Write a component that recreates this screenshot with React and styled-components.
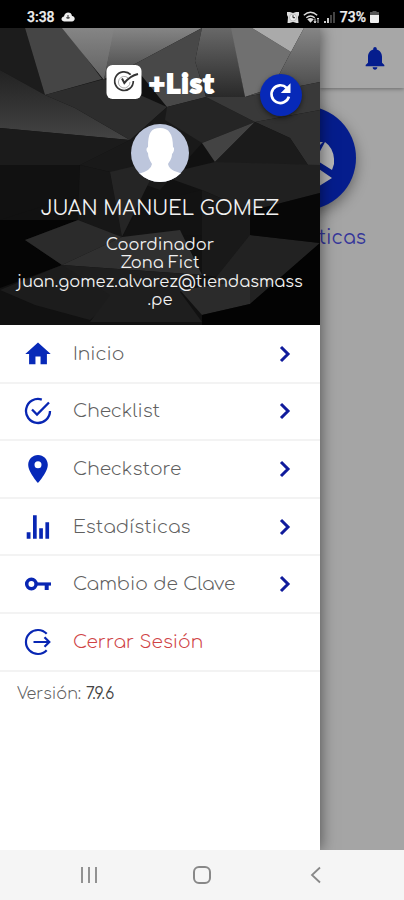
import React from "react";
import styled, { createGlobalStyle } from "styled-components";

const Global = createGlobalStyle`
  * { box-sizing: border-box; }
  body { margin: 0; background: #000; font-family: Comfortaa, Quicksand, Lato, sans-serif; }
  svg { display: block; flex: none; }
`;
const Phone = styled.div`
  width: 404px; height: 900px; overflow: hidden;
  display: grid; grid-template-rows: 28px 822px 50px;
`;
const StatusBar = styled.header`
  background: #000; color: #eee; display: flex; align-items: center;
  padding: 6px 25px 0 27px; font: 500 14px Roboto, sans-serif;
`;
const Clock = styled.span`letter-spacing: ${p => p.$track || 0}px; -webkit-text-stroke: .25px #eee;`;
const CloudIcon = styled.svg`margin-left: 6px;`;
const StatusIcons = styled.div`margin-left: auto; display: flex; align-items: center; gap: 4px;`;
const Body = styled.div`display: grid; grid-template-columns: 320px 84px; min-height: 0; overflow: hidden;`;
const Drawer = styled.aside`
  background: #fff; box-shadow: 1px 0 14px rgba(0,0,0,.5); z-index: 1;
  display: flex; flex-direction: column; min-width: 0;
`;
const Profile = styled.section`
  height: 297px; flex: none; position: relative; overflow: hidden; color: #f2f2f2; background: #111;
  display: flex; flex-direction: column; align-items: center;
`;
const Backdrop = styled.svg`position: absolute; inset: 0;`;
const Brand = styled.div`
  position: relative; display: flex; align-items: center; gap: 7px; margin: 37px 0 0 1px; height: 34px;
`;
const BrandName = styled.span`
  font: 900 27px/34px Lato, sans-serif; letter-spacing: ${p => p.$track}px; color: #fff;
  -webkit-text-stroke: 2px #fff; padding-top: 2px;
`;
const Refresh = styled.button`
  position: absolute; left: 260px; top: 46px; width: 42px; height: 42px; border: 0; padding: 0 2px 2px 0;
  border-radius: 50%; background: #0729b8; display: grid; place-items: center;
  box-shadow: 0 2px 5px rgba(0,0,0,.5);
`;
const Avatar = styled.div`
  position: relative; width: 58px; height: 58px; border-radius: 50%; overflow: hidden;
  margin-top: 24.5px; background: #bdc6dc;
`;
const Name = styled.h1`
  position: relative; margin: 14px 0 0; font-weight: 400; font-size: 19.5px; line-height: 26px;
  white-space: nowrap;
`;
const Details = styled.div`
  position: relative; margin-top: 14.5px; display: flex; flex-direction: column; align-items: center;
`;
const Detail = styled.span`
  font-size: 16.2px; line-height: 18.3px; white-space: nowrap;
`;
const Menu = styled.nav`display: flex; flex-direction: column; padding-top: 1px;`;
const MenuItem = styled.a`
  height: 57.6px; border-bottom: 2px solid #f3f3f3; display: grid; align-items: center;
  grid-template-columns: 28px 1fr 24px; column-gap: 21px; padding: 0 24px;
  color: ${p => (p.$danger ? "#cf4345" : "#606060")};
`;
const Label = styled.span`
  font-size: 18.6px; line-height: 24px; font-weight: 300; white-space: nowrap;
`;
const Version = styled.p`
  margin: 12px 0 0 17px; font-size: 16px; line-height: 20px; color: #606060; font-weight: 300;
`;
const Number = styled.span`color: #444; font-weight: 400;`;
const Page = styled.main`background: #a5a5a5; display: flex; flex-direction: column; overflow: hidden;`;
const TopBar = styled.div`
  height: 60px; flex: none; background: #a7a7a7; box-shadow: 0 1px 4px rgba(0,0,0,.35);
  display: flex; justify-content: center; align-items: center; padding-left: 26px;
`;
const Tile = styled.div`display: flex; flex-direction: column; width: 84px;`;
const Disc = styled.div`
  margin: 18px 0 0 -68px; width: 104px; height: 104px; border-radius: 50%; background: #051d8d;
  box-shadow: 0 5px 14px rgba(0,0,0,.4); display: flex; align-items: center; justify-content: center;
`;
const TileName = styled.span`
  align-self: flex-end; margin: 15px 38px 0 0; color: #35369a; font-size: 19px; line-height: 26px;
  white-space: nowrap;
`;
const NavBar = styled.footer`
  background: #f5f5f5; display: grid; grid-template-columns: repeat(3, 113.5px); padding-left: 32px;
  justify-items: center; align-items: center;
`;

const facets = [
  ["0,28 25,28 45,95 0,70", "#1c1c1c"],
  ["25,28 64,28 102,79 45,95", "#454545"],
  ["62,28 115,28 104,80", "url(#silver)"],
  ["114,28 202,28 133,65 104,79", "url(#steel)"],
  ["202,28 133,65 167,107 206,97 195,61", "#484848"],
  ["202,28 232,28 245,97 206,97 195,61", "url(#fall)"],
  ["231,28 252,28 291,52 272,88 245,97", "#707070"],
  ["252,28 304,28 291,52", "#aaaaaa"],
  ["304,28 320,28 320,82 245,97 272,88 291,52", "url(#steel)"],
  ["0,70 45,95 75,108 130,140 0,128", "url(#fold)"],
  ["45,95 104,79 167,107 130,140 75,108", "#2d2d2d"],
  ["0,128 130,140 80,165 0,165", "#1b1b1b"],
  ["80,165 130,140 167,107 202,143 160,190 110,172", "#191919"],
  ["167,107 206,97 255,122 202,143 165,120", "#252525"],
  ["206,97 245,97 320,82 320,110 255,122", "#393939"],
  ["255,122 320,110 320,185 308,165 290,138", "#303030"],
  ["202,143 255,122 215,162", "#434343"],
  ["255,122 290,138 308,165 270,190 215,162", "#1b1b1b"],
  ["0,165 80,165 78,195 0,220", "#111111"],
  ["80,165 110,172 122,237 78,220", "#171717"],
  ["110,172 160,160 122,237", "#252525"],
  ["160,175 215,162 320,165 320,193 250,211 202,190", "#202020"],
  ["122,237 140,205 202,190 215,235", "#121212"],
  ["0,220 78,220 25,240 62,265 0,288", "#050505"],
  ["25,240 78,220 122,237 62,265", "#2b2b2b"],
  ["62,265 122,237 180,230 202,275", "#303030"],
  ["202,190 250,211 250,280 202,275", "#191919"],
  ["0,290 62,265 130,285 90,320 35,305", "#1c1c1c"],
  ["62,265 202,275 180,292 202,322 90,322 110,295", "#1e1e1e"],
  ["250,235 320,243 250,304 202,295", "#222222"],
  ["180,290 250,280 250,304 202,315", "#2b2b2b"],
  ["320,243 320,325 202,325 202,315 250,304", "#030303"],
  ["250,235 250,211 320,193 320,243", "#070707"],
];

const Polygons = () => (
  <Backdrop width="320" height="297" viewBox="0 28 320 297">
    <defs>
      <linearGradient id="silver" x2="0" y2="1"><stop stopColor="#858585" /><stop offset="1" stopColor="#626262" /></linearGradient>
      <linearGradient id="steel" x2="0" y2="1"><stop stopColor="#858585" /><stop offset="1" stopColor="#454545" /></linearGradient>
      <linearGradient id="fall" x2="0" y2="1"><stop stopColor="#686868" /><stop offset="1" stopColor="#292929" /></linearGradient>
      <linearGradient id="fold" x2="0" y2="1"><stop stopColor="#222" /><stop offset="1" stopColor="#444" /></linearGradient>
    </defs>
    {facets.map(([points, fill]) => <polygon key={points} points={points} fill={fill} />)}
  </Backdrop>
);

const paths = {
  home: "M10 20v-6h4v6h5v-8h3L12 3 2 12h3v8z",
  pin: "M12 2C8.13 2 5 5.13 5 9c0 5.25 7 13 7 13s7-7.75 7-13c0-3.87-3.13-7-7-7zm0 9.5a2.5 2.5 0 0 1 0-5 2.5 2.5 0 0 1 0 5z",
  bell: "M12 22c1.1 0 2-.9 2-2h-4c0 1.1.89 2 2 2zm6-6v-5c0-3.07-1.64-5.64-4.5-6.32V4c0-.83-.67-1.5-1.5-1.5s-1.5.67-1.5 1.5v.68C7.63 5.36 6 7.92 6 11v5l-2 2v1h16v-1l-2-2z",
};
const Icon = ({ name }) => {
  if (name === "check") return (
    <svg width="28" height="28" viewBox="0 0 28 28" fill="none" stroke="#0826b3" strokeWidth="2.3">
      <path d="M17.8 2.6A12 12 0 1 0 26 14" /><path d="m8 12.5 5 5L25 5.5" />
    </svg>
  );
  if (name === "exit") return (
    <svg width="28" height="28" viewBox="0 0 28 28" fill="none" stroke="#0826b3" strokeWidth="2.2">
      <path d="M22.7 5.8a12 12 0 1 0 0 16.4M9.5 14H25M20.5 9.2l4.8 4.8-4.8 4.8" />
    </svg>
  );
  if (name === "bars") return (
    <svg width="28" height="28" viewBox="0 0 28 28" fill="#0826b3">
      <path d="M2.7 19.3h3.8v6.5H2.7zM9 2.2h3.7v23.6H9zM15.2 15.3h3.7v10.5h-3.7zM21.4 9.3h3.7v16.5h-3.7z" />
    </svg>
  );
  if (name === "key") return (
    <svg width="28" height="28" viewBox="0 0 28 28" fill="none" stroke="#0826b3">
      <circle cx="7.4" cy="14" r="4.7" strokeWidth="3.5" /><path d="M12 14h15" strokeWidth="3.2" /><path d="M22.7 14v6" strokeWidth="4" />
    </svg>
  );
  return <svg width="28" height="28" viewBox={name === "home" ? "1 1 22 22" : "2 2 20 20"} fill="#0729b8"><path d={paths[name]} /></svg>;
};
const Chevron = () => (
  <svg width="24" height="24" viewBox="0 0 24 24" fill="none" stroke="#101b9c" strokeWidth="3">
    <path d="m9 5 7 7-7 7" />
  </svg>
);
const items = [
  ["Inicio", "home"], ["Checklist", "check"], ["Checkstore", "pin"],
  ["Estadísticas", "bars"], ["Cambio de Clave", "key"], ["Cerrar Sesión", "exit"],
];

export default function App() {
  return (
    <Phone>
      <Global />
      <StatusBar>
        <Clock>3:38</Clock>
        <CloudIcon width="14" height="10" viewBox="0 0 14 10"><path d="M3 9.5C-.5 9-.2 5 3 4.6 3.5-.5 10.5-.7 11 4c3.7.4 3.5 5 0 5.5z" fill="#eee" /><path d="M7 3v4M5.2 5.8h3.6" stroke="#333" /></CloudIcon>
        <StatusIcons>
          <svg width="12" height="12" viewBox="0 0 12 12"><path d="M0 1h3l3 1 3-1h3v3l-1 2 .5 6H9.500L6 11l-3.500 1H.5L1 6 0 4z" fill="#ddd" /><circle cx="6" cy="6.500" r="3.500" fill="#eee" stroke="#999" strokeWidth=".5" /><path d="M6 4.300v2.400h2" fill="none" stroke="#222" /></svg>
          <svg width="17" height="13" viewBox="0 0 17 13" fill="none" stroke="#ddd" strokeWidth="1.4"><path d="M.8 4.2Q7.5-1.8 14.2 4.2M3.3 6.8q4.2-3.5 8.4 0" /><path d="m5.3 8.4 2.2 2.4 2.2-2.4q-2.2-1.4-4.4 0z" fill="#ddd" /><path d="M12 7.5V12m3-5v5M11 10l1 2 1-2m1-2 1-1 1 1" strokeWidth="1" /></svg>
          <svg width="12" height="12" viewBox="0 0 12 12"><path d="M0 10h2v2H0zM3 7h2v5H3z" fill="#ccc" /><path d="M6 4h2v8H6zM9 1h2v11H9z" fill="#444" /></svg>
          <Clock>73%</Clock>
          <svg width="9" height="12" viewBox="0 0 9 12"><path d="M2.5 0h4v1H9v3H0V1h2.5z" fill="#555" /><path d="M0 4h9v7q0 1-1 1H1q-1 0-1-1z" fill="#eee" /></svg>
        </StatusIcons>
      </StatusBar>
      <Body>
        <Drawer>
          <Profile>
            <Polygons />
            <Brand>
              <svg width="36" height="34" viewBox="0 0 36 34" fill="none"><rect x=".5" width="35" height="34" rx="6" fill="#fff" /><path d="M24.7 9.7A9.3 9.3 0 1 0 27.3 16" stroke="#333" strokeWidth="1.7" /><path d="M22.2 13A5.8 5.8 0 1 0 24 17" stroke="#999" strokeWidth=".8" /><path d="M16 13.5 18.3 18Q24 11 32 9" stroke="#333" strokeWidth="2" /></svg>
              <BrandName $track={1.4}>+List</BrandName>
            </Brand>
            <Refresh aria-label="Actualizar">
              <svg width="26" height="26" viewBox="0 0 24 24" fill="none"><path d="M18.2 6.400A8.200 8.200 0 1 0 20.200 14.500" stroke="#fff" strokeWidth="2.5" /><path d="M21.7 2v9h-9z" fill="#fff" /></svg>
            </Refresh>
            <Avatar>
              <svg width="58" height="58" viewBox="0 0 58 58"><path d="M7 58V50q13-3 14-10-4-6-4-11c-2-2-2-5 0-6C17 9 20 4 29 4s13 6 13 19c2 1 1 5-1 7 0 5-3 8-4 10 1 7 11 8 14 10v8z" fill="#fff" /></svg>
            </Avatar>
            <Name>JUAN MANUEL GOMEZ</Name>
            <Details>
              <Detail>Coordinador</Detail>
              <Detail>Zona Fict</Detail>
              <Detail>juan.gomez.alvarez@tiendasmass</Detail>
              <Detail>.pe</Detail>
            </Details>
          </Profile>
          <Menu>
            {items.map(([label, icon]) => (
              <MenuItem key={label} $danger={icon === "exit"}>
                <Icon name={icon} />
                <Label>{label}</Label>
                {icon !== "exit" && <Chevron />}
              </MenuItem>
            ))}
          </Menu>
          <Version>Versión: <Number>7.9.6</Number></Version>
        </Drawer>
        <Page>
          <TopBar><svg width="28" height="28" viewBox="0 0 24 24" fill="#051d8d"><path d={paths.bell} /></svg></TopBar>
          <Tile>
            <Disc><svg width="60" height="60" viewBox="0 0 60 60" fill="#b5b5b5"><path d="M0 30A29 29 0 0 1 45 6L28 28 46 41 40 57A29 29 0 0 1 0 30z" /><path d="M45 25 51 14q10 7 9 22l-2 6L45 34zM45 41 58 50 45 58z" /><path d="M45 18v-4h4z" /></svg></Disc>
            <TileName>Estadísticas</TileName>
          </Tile>
        </Page>
      </Body>
      <NavBar>
        <svg width="18" height="18" viewBox="0 0 18 18" stroke="#929292" strokeWidth="2"><path d="M2 1v16M9 1v16M16 1v16" /></svg>
        <svg width="20" height="20" viewBox="0 0 20 20" fill="none" stroke="#888" strokeWidth="2"><rect x="2" y="2" width="16" height="16" rx="5" /></svg>
        <svg width="18" height="18" viewBox="0 0 18 18" fill="none" stroke="#888" strokeWidth="1.8"><path d="M13 1.5 5 9l8 7.5" /></svg>
      </NavBar>
    </Phone>
  );
}
